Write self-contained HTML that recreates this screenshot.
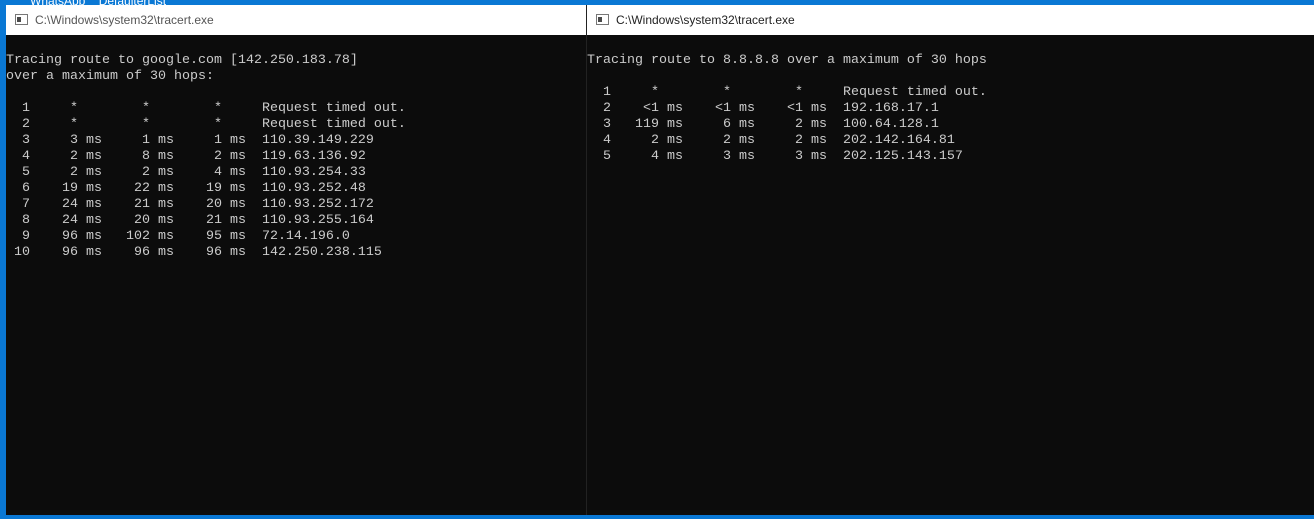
<!DOCTYPE html>
<html><head><style>
body{margin:0;width:1314px;height:519px;background:#0a78d4;position:relative;overflow:hidden;font-family:"Liberation Sans",sans-serif}
.win{position:absolute;top:5px;height:510px;background:#0c0c0c}
.tb{position:absolute;left:0;right:0;top:0;height:30px;background:#fff;color:#555;font-size:12px}
.tb span{position:absolute;top:8px}
.ic{position:absolute;top:9px;width:11px;height:9px;border:1px solid #777;background:#fff}
.ic:before{content:"";position:absolute;left:1px;top:2px;width:4px;height:5px;background:#4a4a4a}
pre{position:absolute;top:48px;margin:0;color:#cccccc;font-family:"Liberation Mono",monospace;font-size:13.33px;line-height:16px}
</style></head><body>
<div style="position:absolute;left:30px;top:-6px;color:#fff;font-size:12px">WhatsApp &nbsp;&nbsp; DefaulterList</div>
<div class="win" style="left:6px;width:581px">
<div class="tb"><div class="ic" style="left:9px"></div><span style="left:29px">C:\Windows\system32\tracert.exe</span></div>
<pre style="left:0">Tracing route to google.com [142.250.183.78]
over a maximum of 30 hops:

  1     *        *        *     Request timed out.
  2     *        *        *     Request timed out.
  3     3 ms     1 ms     1 ms  110.39.149.229
  4     2 ms     8 ms     2 ms  119.63.136.92
  5     2 ms     2 ms     4 ms  110.93.254.33
  6    19 ms    22 ms    19 ms  110.93.252.48
  7    24 ms    21 ms    20 ms  110.93.252.172
  8    24 ms    20 ms    21 ms  110.93.255.164
  9    96 ms   102 ms    95 ms  72.14.196.0
 10    96 ms    96 ms    96 ms  142.250.238.115</pre>
</div>
<div class="win" style="left:586px;width:728px;border-left:1px solid #222">
<div class="tb"><div class="ic" style="left:9px"></div><span style="left:29px;color:#222">C:\Windows\system32\tracert.exe</span></div>
<pre style="left:0">Tracing route to 8.8.8.8 over a maximum of 30 hops

  1     *        *        *     Request timed out.
  2    &lt;1 ms    &lt;1 ms    &lt;1 ms  192.168.17.1
  3   119 ms     6 ms     2 ms  100.64.128.1
  4     2 ms     2 ms     2 ms  202.142.164.81
  5     4 ms     3 ms     3 ms  202.125.143.157</pre>
</div>
</body></html>
